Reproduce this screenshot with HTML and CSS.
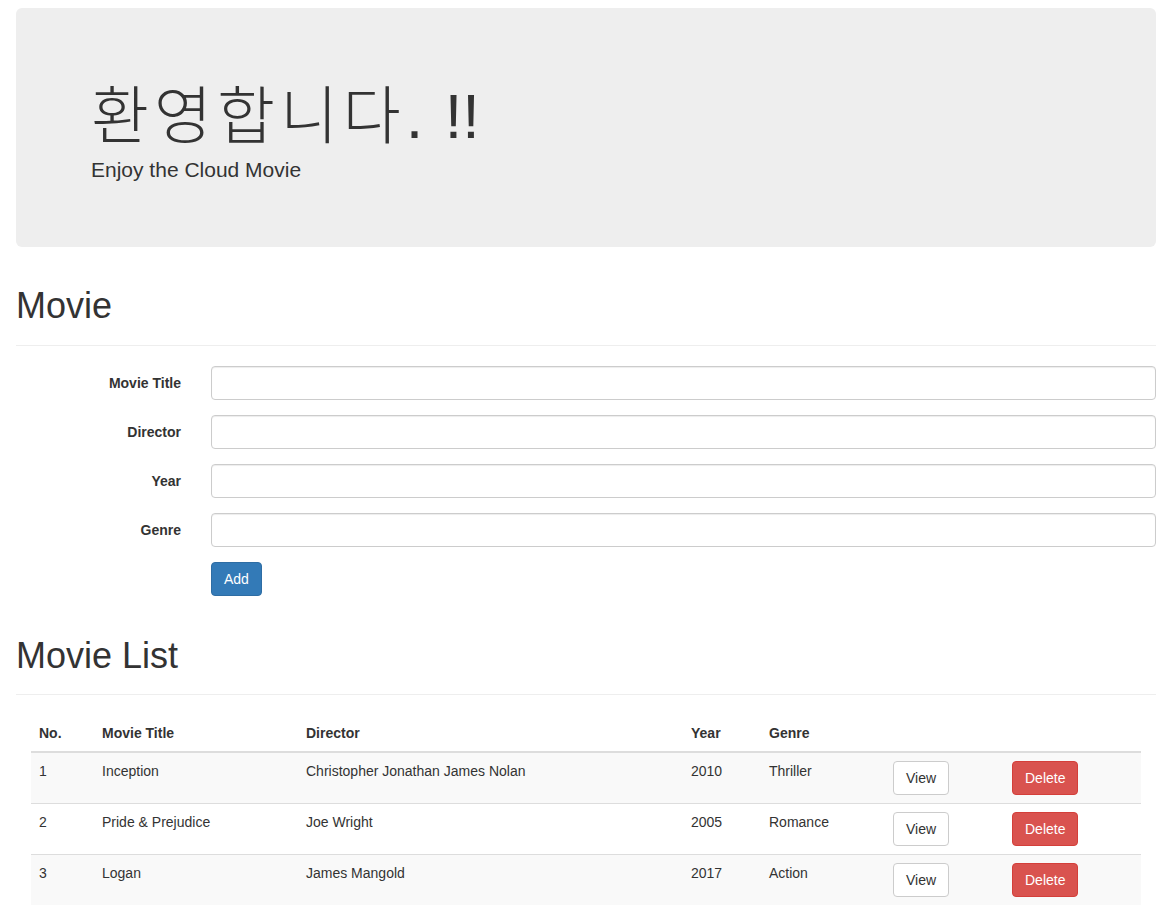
FILE: index.html
```html
<!DOCTYPE html>
<html lang="ko">
<head>
<meta charset="utf-8">
<title>Cloud Movie</title>
<link rel="stylesheet" href="styles.css">
</head>
<body>
<div class="page">
  <div class="jumbotron">
    <h1 class="hero-title"><span class="hangul">환영합니다</span>. !!</h1>
    <p class="hero-sub">Enjoy the Cloud Movie</p>
  </div>

  <div class="page-header first">
    <h1>Movie</h1>
  </div>

  <form class="movie-form">
    <div class="form-group">
      <label class="form-label">Movie Title</label>
      <div class="form-field"><input class="form-control" type="text"></div>
    </div>
    <div class="form-group">
      <label class="form-label">Director</label>
      <div class="form-field"><input class="form-control" type="text"></div>
    </div>
    <div class="form-group">
      <label class="form-label">Year</label>
      <div class="form-field"><input class="form-control" type="text"></div>
    </div>
    <div class="form-group">
      <label class="form-label">Genre</label>
      <div class="form-field"><input class="form-control" type="text"></div>
    </div>
    <div class="form-group">
      <span class="form-label"></span>
      <div class="form-field"><button type="button" class="btn btn-primary">Add</button></div>
    </div>
  </form>

  <div class="page-header">
    <h1>Movie List</h1>
  </div>

  <div class="table-wrap">
    <table class="table">
      <colgroup>
        <col class="c-no"><col class="c-title"><col class="c-dir"><col class="c-year"><col class="c-genre"><col class="c-view"><col class="c-del">
      </colgroup>
      <thead>
        <tr><th>No.</th><th>Movie Title</th><th>Director</th><th>Year</th><th>Genre</th><th></th><th></th></tr>
      </thead>
      <tbody>
        <tr><td>1</td><td>Inception</td><td>Christopher Jonathan James Nolan</td><td>2010</td><td>Thriller</td><td><button class="btn btn-default">View</button></td><td><button class="btn btn-danger">Delete</button></td></tr>
        <tr><td>2</td><td>Pride &amp; Prejudice</td><td>Joe Wright</td><td>2005</td><td>Romance</td><td><button class="btn btn-default">View</button></td><td><button class="btn btn-danger">Delete</button></td></tr>
        <tr><td>3</td><td>Logan</td><td>James Mangold</td><td>2017</td><td>Action</td><td><button class="btn btn-default">View</button></td><td><button class="btn btn-danger">Delete</button></td></tr>
      </tbody>
    </table>
  </div>
</div>
</body>
</html>
```

FILE: styles.css
```css
* { box-sizing: border-box; }
html, body { margin: 0; padding: 0; background: #fff; }
body {
  font-family: "Liberation Sans", Arial, "Noto Sans CJK KR", sans-serif;
  font-size: 14px;
  line-height: 1.42857;
  color: #333;
}
.page { padding: 8px 11px 0 16px; }

.jumbotron {
  background: #eee;
  border-radius: 6px;
  padding: 48px 75px 47px 75px;
}
.hero-title {
  margin: 20px 0 10px 0;
  font-size: 63px;
  line-height: 1.1;
  font-weight: 500;
  font-family: "Liberation Sans", Arial, "Noto Sans CJK KR", sans-serif;
  height: 69px;
  word-spacing: 4px;
}
.hangul {
  font-family: "Noto Sans CJK KR", sans-serif;
  font-weight: 300;
  letter-spacing: 5px;
}
.hero-sub {
  margin: 0 0 15px 0;
  font-size: 21px;
  line-height: 30px;
}

.page-header {
  margin: 40px 0 20px 0;
  padding-bottom: 9px;
  border-bottom: 1px solid #eee;
}
.page-header.first { margin-top: 39px; }
.page-header h1 {
  margin: 0 0 10px 0;
  font-size: 36px;
  font-weight: 500;
  line-height: 1.1;
}

.movie-form { margin: 0; }
.form-group {
  display: flex;
  margin: 0 -15px 15px -15px;
}
.form-label {
  width: 195px;
  padding: 8px 15px 0 15px;
  text-align: right;
  font-weight: bold;
  flex: none;
}
.form-field {
  flex: 1;
  padding: 0 15px;
}
.form-control {
  display: block;
  width: 100%;
  height: 34px;
  padding: 6px 12px;
  font-size: 14px;
  font-family: inherit;
  color: #555;
  background: #fff;
  border: 1px solid #ccc;
  border-radius: 4px;
  box-shadow: inset 0 1px 1px rgba(0,0,0,.075);
}

.btn {
  display: inline-block;
  padding: 6px 12px;
  font-size: 14px;
  line-height: 20px;
  font-family: inherit;
  border: 1px solid transparent;
  border-radius: 4px;
  cursor: pointer;
  vertical-align: middle;
}
.btn-primary { color: #fff; background: #337ab7; border-color: #2e6da4; }
.btn-default { color: #333; background: #fff; border-color: #ccc; }
.btn-danger { color: #fff; background: #d9534f; border-color: #d43f3a; }

.table-wrap { padding: 0 15px; }
.table {
  width: 100%;
  border-collapse: collapse;
  border-spacing: 0;
  table-layout: fixed;
}
.c-no { width: 63px; }
.c-title { width: 204px; }
.c-dir { width: 385px; }
.c-year { width: 78px; }
.c-genre { width: 124px; }
.c-view { width: 119px; }
.c-del { width: 137px; }
.table th {
  text-align: left;
  font-weight: bold;
  padding: 8px;
  line-height: 20px;
  vertical-align: bottom;
  border-bottom: 2px solid #ddd;
}
.table td {
  padding: 8px;
  line-height: 20px;
  vertical-align: top;
  border-top: 1px solid #ddd;
}
.table tbody tr:first-child td { border-top: 0; }
.table tbody tr:nth-child(odd) { background: #f9f9f9; }
```
